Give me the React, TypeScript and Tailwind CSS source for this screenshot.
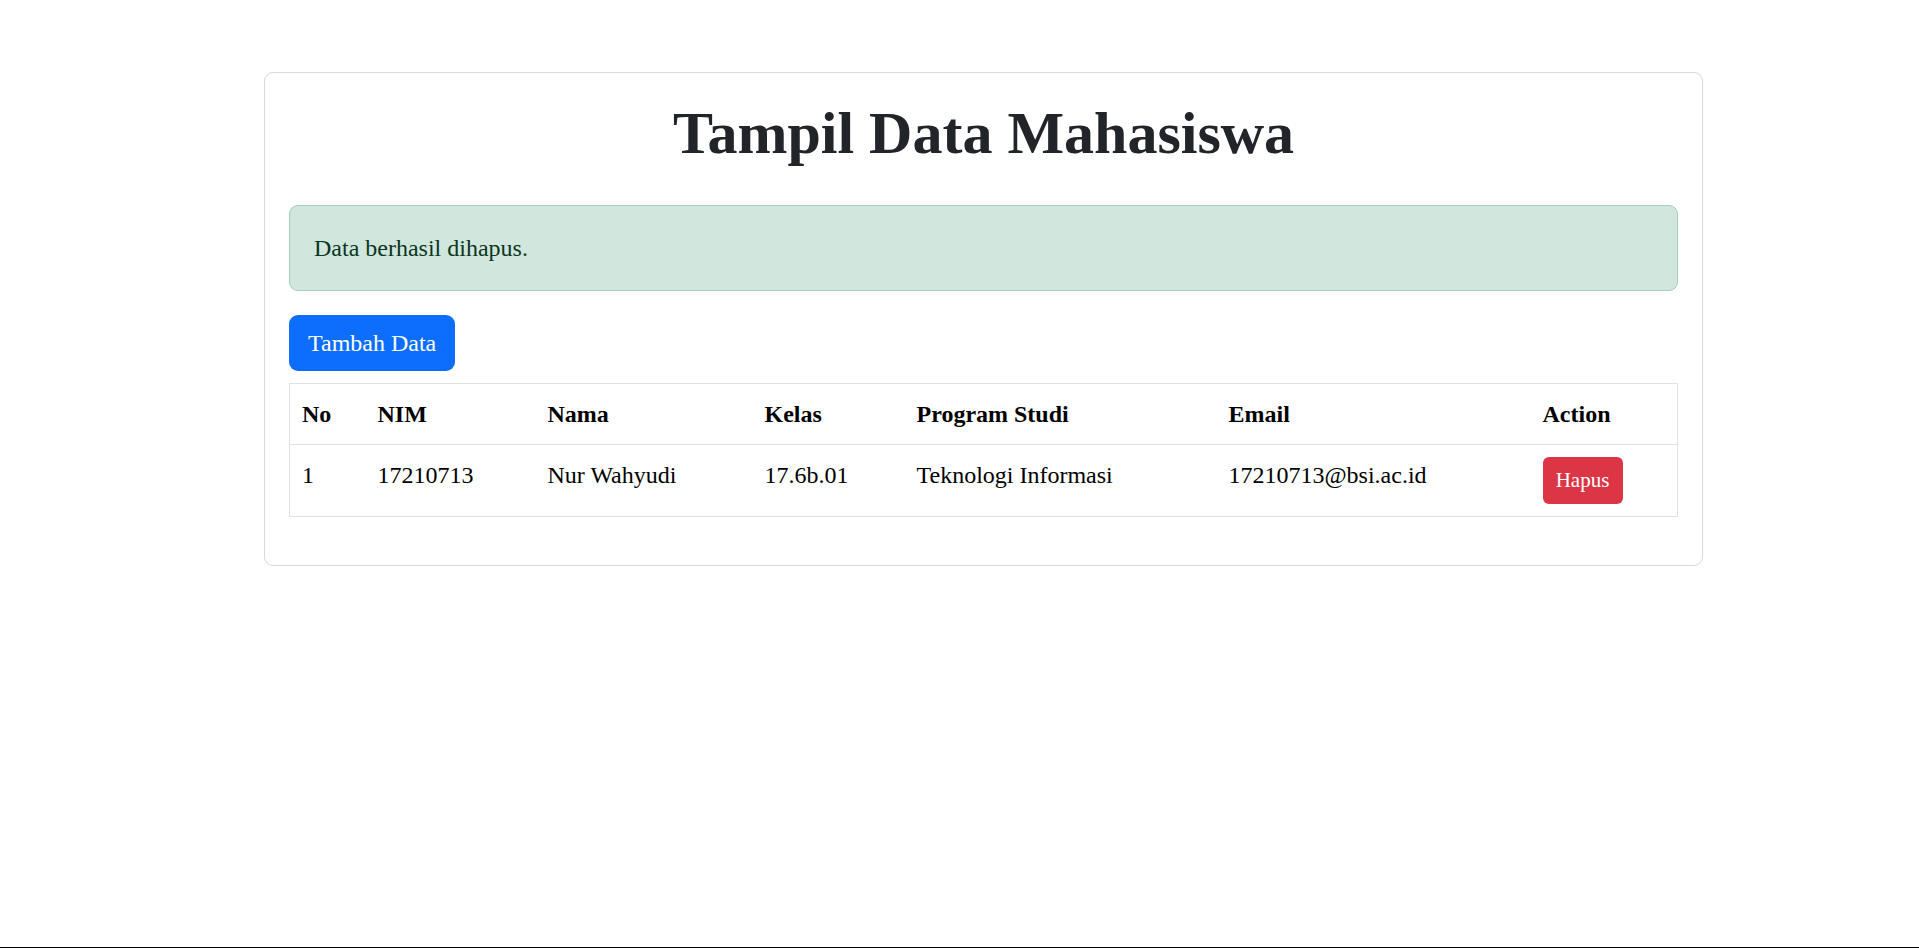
const rows = [
  {
    no: 1,
    nim: "17210713",
    nama: "Nur Wahyudi",
    kelas: "17.6b.01",
    prodi: "Teknologi Informasi",
    email: "17210713@bsi.ac.id",
  },
]

export default function App() {
  return (
    <div
      className="flex h-[948px] flex-col bg-white text-[#212529]"
      style={{ fontFamily: '"Liberation Serif", "Times New Roman", serif' }}
    >
      <main className="flex-1 pt-[72px] pl-[264px]">
        <div className="w-[1439px] rounded-[9px] border border-[#d9d9d9] p-6">
          <h1 className="mb-9 text-center text-[60px] leading-[72px] font-bold">
            Tampil Data Mahasiswa
          </h1>

          <div className="mb-6 rounded-[9px] border border-[#a3cfbb] bg-[#d1e7dd] p-6 text-[24px] leading-[36px] text-[#0a3622]">
            Data berhasil dihapus.
          </div>

          <button className="mb-3 rounded-[9px] bg-[#0d6efd] px-[19px] py-[9px] text-[24px] leading-[38px] text-white">
            Tambah Data
          </button>

          <table className="mb-6 w-full table-fixed border-collapse border border-[#dee2e6] text-[24px] leading-[36px] text-black">
            <thead>
              <tr className="border-b border-[#dee2e6] text-left">
                <th className="w-[76px] px-3 py-3 font-bold">No</th>
                <th className="w-[170px] px-3 py-3 font-bold">NIM</th>
                <th className="w-[217px] px-3 py-3 font-bold">Nama</th>
                <th className="w-[152px] px-3 py-3 font-bold">Kelas</th>
                <th className="w-[312px] px-3 py-3 font-bold">Program Studi</th>
                <th className="w-[314px] px-3 py-3 font-bold">Email</th>
                <th className="px-3 py-3 font-bold">Action</th>
              </tr>
            </thead>
            <tbody>
              {rows.map((r) => (
                <tr key={r.nim} className="border-b border-[#dee2e6] align-top">
                  <td className="px-3 py-3">{r.no}</td>
                  <td className="px-3 py-3">{r.nim}</td>
                  <td className="px-3 py-3">{r.nama}</td>
                  <td className="px-3 py-3">{r.kelas}</td>
                  <td className="px-3 py-3">{r.prodi}</td>
                  <td className="px-3 py-3">{r.email}</td>
                  <td className="px-3 py-3">
                    <button className="block w-[80px] rounded-[6px] bg-[#dc3545] py-[6px] text-center text-[21px] leading-[35px] text-white">
                      Hapus
                    </button>
                  </td>
                </tr>
              ))}
            </tbody>
          </table>
        </div>
      </main>
      <div className="h-px bg-black" />
    </div>
  )
}
